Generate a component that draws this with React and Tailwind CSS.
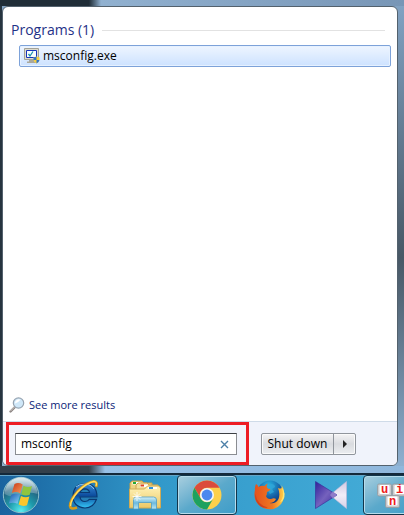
import { useState } from 'react';

// === ICONS ===
const MsconfigIcon = () => (
  <svg width="16" height="16" viewBox="0 0 16 16" className="shrink-0" aria-hidden="true">
    <path d="M0.500 0.500h14v11h-14z" fill="#dedbcd" stroke="#a3a298" strokeWidth="1" />
    <path d="M2.500 2.500h10v7h-10z" fill="#f7fcff" stroke="#1733b8" strokeWidth="1" />
    <path d="M4.500 6l1.500 2 3-4.500" fill="none" stroke="#1d93ad" strokeWidth="1.300" />
    <path d="M5 12h5v1.500h2V15H3v-1.500h2z" fill="#aaa89c" />
    <path d="M12.500 8.500q1.500 1 3 .7v2.500q-.5 2.300-3 3.800-2.500-1.500-3-3.800V9.200q1.500.3 3-.7z" fill="#f7cf3d" />
    <path d="M12.500 8.500q-1.500 1-3 .7V12h3zM12.500 12h3q-.5 2-3 3.500z" fill="#3173c8" />
  </svg>
);

const MagnifierIcon = () => (
  <svg width="16" height="16" viewBox="0 0 16 16" className="shrink-0" aria-hidden="true">
    <path d="M6 10L1.500 14.500" stroke="#8a8380" strokeWidth="2.400" strokeLinecap="round" />
    <path d="M6 9.500L1.500 14" stroke="#d6d0cd" strokeWidth="1" strokeLinecap="round" />
    <circle cx="9.500" cy="6" r="5.200" fill="#cfe7f8" stroke="#98a5b2" strokeWidth="1.200" />
    <path d="M6 6.500a3.800 3.800 0 0 1 5.500-3.700Q9 6 6 6.500z" fill="#fff" />
  </svg>
);

const StartOrb = () => (
  <svg width="38" height="38" viewBox="0 0 38 38" aria-hidden="true">
    <defs>
      <radialGradient id="orb" cx="50%" cy="95%" r="90%">
        <stop offset="0" stopColor="#58eef0" />
        <stop offset="0.4" stopColor="#1e9aab" />
        <stop offset="0.75" stopColor="#246582" />
        <stop offset="1" stopColor="#78a9bb" />
      </radialGradient>
      <linearGradient id="orbShine" x1="0" y1="0" x2="0" y2="1">
        <stop offset="0" stopColor="#fff" stopOpacity="0.75" />
        <stop offset="1" stopColor="#fff" stopOpacity="0.15" />
      </linearGradient>
      <linearGradient id="flagRed" x1="0" y1="0" x2="1" y2="1">
        <stop offset="0" stopColor="#c93a16" />
        <stop offset="1" stopColor="#f79a5c" />
      </linearGradient>
      <linearGradient id="flagBlue" x1="0" y1="0" x2="1" y2="1">
        <stop offset="0" stopColor="#1a58b0" />
        <stop offset="1" stopColor="#86d7f8" />
      </linearGradient>
    </defs>
    <circle cx="19" cy="19" r="17.700" fill="url(#orb)" stroke="#8ebfca" strokeWidth="1" />
    <path d="M2.500 18A16.500 16.500 0 0 1 35.500 18Q27 15 19 19T2.500 18z" fill="url(#orbShine)" />
    <path d="M12.500 8q4-2 8.200.5L18.300 17.500q-4-2.500-8.500-.5z" fill="url(#flagRed)" />
    <path d="M21.500 9.700q4 2.200 8.500.3L27.700 18.800q-4 1.800-8.400-.5z" fill="#8fc63f" />
    <path d="M9.300 18.800q4.500-2 8.700.2L15.500 27.800q-4-2-8.700-.4z" fill="url(#flagBlue)" />
    <path d="M19 20q4 2.200 8.400.5L25 29.300q-4 1.700-8.400-.7z" fill="#fbc62b" />
  </svg>
);

const ExplorerIcon = () => (
  <svg width="32" height="32" viewBox="0 0 32 32" aria-hidden="true">
    <defs>
      <linearGradient id="ieBlue" x1="0" y1="0" x2="0" y2="1">
        <stop offset="0" stopColor="#3a8ddb" />
        <stop offset="0.5" stopColor="#0c4c9d" />
        <stop offset="1" stopColor="#35c6f6" />
      </linearGradient>
    </defs>
    <path
      fillRule="evenodd"
      d="M30 18H13q.5 4.500 5 4.500 3 0 4.300-2.200H29.500Q26.500 29 18 29 6 28 6 17 6.500 5 18 4.500 30 5 30 18zM13 13.500h9.500q-.5-3.500-4.500-3.700-4 .2-5 3.700z"
      fill="url(#ieBlue)"
      stroke="#0b3972"
      strokeWidth="1.200"
    />
    <path d="M9 8q4-3.500 9-3 6 .3 9 5" fill="none" stroke="#8fc9f3" strokeWidth="1" />
    <path
      d="M29 8Q31 2.500 27 2.200 20 3 11 12 3 21 3 27q.5 4 7 1.500"
      fill="none"
      stroke="#d99b16"
      strokeWidth="2.600"
    />
    <path d="M29 7Q30.500 2.500 27 2.500 20 3.500 11 12.500 3.500 21 3.500 27" fill="none" stroke="#ffdf66" strokeWidth="1.300" />
  </svg>
);

const FolderIcon = () => (
  <svg width="34" height="30" viewBox="0 0 34 30" aria-hidden="true">
    <defs>
      <linearGradient id="folder" x1="0" y1="0" x2="0" y2="1">
        <stop offset="0" stopColor="#fff3b8" />
        <stop offset="1" stopColor="#ecc866" />
      </linearGradient>
      <linearGradient id="stand" x1="0" y1="0" x2="0" y2="1">
        <stop offset="0" stopColor="#d3f2fd" />
        <stop offset="0.5" stopColor="#64b8e4" />
        <stop offset="1" stopColor="#bdeafa" />
      </linearGradient>
    </defs>
    <path d="M2 27V3l2-2h10l2 2h8v24z" fill="#edd281" stroke="#c79f45" />
    <path d="M4.500 2h8v2.500h-8z" fill="#fff" />
    <path d="M5 2h3v2H5z" fill="#25a937" />
    <path d="M8 27V5l2-2h9l2 2h9v22z" fill="#f4df98" stroke="#cca54f" />
    <path d="M12 4.500h8V7h-8z" fill="#fff" />
    <path d="M12.500 4.500h3.500v2h-3.500z" fill="#d94527" />
    <path d="M1.500 28V9h15l3-3h11.500l1.500 2v20z" fill="url(#folder)" stroke="#d1ab54" />
    <path d="M20 7h9v2h-9z" fill="#fff" />
    <path d="M21 7h4v2h-4z" fill="#2d91db" />
    <path
      d="M5.500 29V20q0-3 3-3h17q3 0 3 3v9h-5v-6.500h-13V29z"
      fill="url(#stand)"
      fillOpacity="0.95"
      stroke="#4f9dc7"
      strokeWidth="0.8"
    />
    <path d="M9 12v9M4.500 16.500h9M6 13.500l6 6M12 13.500l-6 6" stroke="#fff" strokeWidth="0.8" />
  </svg>
);

const ChromeIcon = () => (
  <svg width="30" height="30" viewBox="0 0 30 30" aria-hidden="true">
    <circle cx="15" cy="15" r="14.500" fill="#fcd04b" />
    <path d="M2.450 7.750A14.500 14.500 0 0 1 27.550 7.750H15A7.250 7.250 0 0 0 8.720 18.620z" fill="#db4c3c" />
    <path d="M2.450 7.750A14.500 14.500 0 0 0 15 29.500L21.280 18.620A7.250 7.250 0 0 1 8.720 18.620z" fill="#1da15f" />
    <circle cx="15" cy="15" r="7" fill="#f4f6f8" />
    <circle cx="15" cy="15" r="5.400" fill="#4a88ee" />
  </svg>
);

const FirefoxIcon = () => (
  <svg width="32" height="32" viewBox="0 0 32 32" aria-hidden="true">
    <defs>
      <radialGradient id="globe" cx="45%" cy="20%" r="80%">
        <stop offset="0" stopColor="#28b7e5" />
        <stop offset="0.6" stopColor="#15599f" />
        <stop offset="1" stopColor="#112b69" />
      </radialGradient>
      <linearGradient id="fox" x1="0" y1="0" x2="1" y2="0">
        <stop offset="0" stopColor="#e2511d" />
        <stop offset="0.6" stopColor="#ef7721" />
        <stop offset="1" stopColor="#ffd34a" />
      </linearGradient>
    </defs>
    <circle cx="17" cy="14.500" r="13" fill="url(#globe)" />
    <path d="M18 5q4 0 4 3l-3 2 2 3-4 2-2-3-3-1 2-4z" fill="#31a6d8" fillOpacity="0.8" />
    <path
      d="M3 5q2 1 2.500 3 3-2 6-1 1-2 3.500-2.500-2 2.500-1 4 .5 1.500 3.500 1.500-.5 2-3.500 3 0 3-1 4 1 3.500 5 3 3-1.500 5 0-2 4-6.500 4 6 1.500 9-4 2-5-.5-11Q30 11 28.500 6q3.500 5 2.500 11Q30 27 20.500 30 11 31.500 5 25 0 19 2 11 1.500 8 3 5z"
      fill="url(#fox)"
    />
    <path d="M2.500 15Q4 26 15 28.500 8 30 4 23.500 1.500 19 2.500 15z" fill="#cf431d" />
    <path d="M29 9q3 8-2 14.500 5-2.500 4.500-9Q31 11 29 9z" fill="#ffe574" />
  </svg>
);

const BowtieIcon = () => (
  <svg width="32" height="28" viewBox="0 0 32 28" aria-hidden="true">
    <defs>
      <linearGradient id="bowDark" x1="0" y1="0" x2="1" y2="1">
        <stop offset="0" stopColor="#30209b" />
        <stop offset="0.5" stopColor="#7562bd" />
        <stop offset="1" stopColor="#38249a" />
      </linearGradient>
      <linearGradient id="bowLight" x1="0" y1="0" x2="0" y2="1">
        <stop offset="0" stopColor="#d0c8e2" />
        <stop offset="0.5" stopColor="#f1edf7" />
        <stop offset="1" stopColor="#d8d1e8" />
      </linearGradient>
    </defs>
    <path d="M31.500 0.500v27L15 14z" fill="url(#bowLight)" stroke="#c2b8d9" strokeWidth="0.600" />
    <path d="M0.500 0.500L22 14 0.500 27.500z" fill="url(#bowDark)" stroke="#382996" strokeWidth="0.600" />
    <path d="M15 14l3-3.500 4 3.500-4 3.500z" fill="#8f7cc9" />
  </svg>
);

const Key = ({ x, y, letter }) => (
  <g>
    <rect x={x} y={y} width="14" height="12" rx="1.500" fill="#c9cacd" stroke="#95999d" strokeWidth="0.800" />
    <rect x={x + 2} y={y + 1} width="10" height="9" rx="1" fill="#fff" />
    <text x={x + 7} y={y + 9} textAnchor="middle" fontSize="12" fontWeight="700" fill="#ee1c1c" className="font-['Liberation_Mono',monospace]">
      {letter}
    </text>
  </g>
);

const KeysIcon = () => (
  <svg width="32" height="28" viewBox="0 0 32 28" aria-hidden="true">
    <Key x={0.500} y={3} letter="u" />
    <Key x={15.500} y={3} letter="i" />
    <Key x={8.500} y={14.500} letter="n" />
  </svg>
);

// === TASKBAR ===
const TaskButton = ({ label, icon: Icon, isOpen }) => (
  <button
    type="button"
    aria-label={label}
    className={`flex h-10 w-15 shrink-0 items-center justify-center rounded-sm border ${
      isOpen
        ? 'border-[#12364c] bg-linear-to-br from-[#a9cfdf] via-[#5ba9cb] to-[#3d9dc9] shadow-[inset_0_0_0_1px_#b5dcec]'
        : 'border-transparent'
    }`}
  >
    <Icon />
  </button>
);

const tasks = [
  { label: 'Internet Explorer', icon: ExplorerIcon },
  { label: 'Windows Explorer', icon: FolderIcon },
  { label: 'Google Chrome', icon: ChromeIcon, isOpen: true },
  { label: 'Firefox', icon: FirefoxIcon },
  { label: 'Media Player', icon: BowtieIcon },
  { label: 'Keyboard', icon: KeysIcon, isOpen: true },
];

const Taskbar = () => (
  <nav
    aria-label="Taskbar"
    className="flex h-[42px] items-center gap-0.5 overflow-hidden border-t-2 border-[#14293a] bg-linear-to-r from-[#19639f] via-[#3299ca] via-40% to-[#45add8] shadow-[inset_0_1px_0_#65a5c8]"
  >
    <button type="button" aria-label="Start" className="flex w-[51px] shrink-0 items-center pl-0.5">
      <StartOrb />
    </button>
    {tasks.map((task) => (
      <TaskButton key={task.label} {...task} />
    ))}
  </nav>
);

// === START MENU ===
const StartMenu = () => {
  const [query, setQuery] = useState('msconfig');

  return (
    <section className="mr-1.5 flex flex-1 flex-col overflow-hidden rounded-md border border-[#53616d] bg-white">
      <div className="flex flex-1 flex-col pt-3">
        <div className="flex items-center gap-2 pr-3 pl-2">
          <h2 className="text-[14px] leading-[22px] text-[#1f3287]">Programs (1)</h2>
          <div className="h-px flex-1 bg-[#e2e2e2]" />
        </div>
        <button
          type="button"
          className="mt-1 mr-1.5 ml-4 flex h-[22px] items-center gap-[3px] rounded-xs border border-[#7da2d9] bg-linear-to-b from-[#eef5ff] to-[#cde2ff] pl-1 text-xs text-black shadow-[inset_0_0_0_1px_#e6f1ff]"
        >
          <MsconfigIcon />
          msconfig.exe
        </button>
        <a href="#results" className="mt-auto mb-1.5 flex h-5 items-center gap-1 pl-1.5 text-[11px] text-[#0b1d78]">
          <MagnifierIcon />
          See more results
        </a>
      </div>

      <div className="flex items-center gap-3 border-t border-[#cfdbe8] bg-[#f0f3fb] pl-[3px]">
        <div className="border-3 border-[#ed1c24] pt-2 pr-[9px] pb-[7px] pl-1.5">
          <div className="flex h-[22px] w-[222px] items-center border border-[#8a8d92] border-t-[#3c3f44] bg-white pr-1.5 pl-[5px]">
            <input
              type="text"
              aria-label="Search programs and files"
              value={query}
              onChange={(e) => setQuery(e.target.value)}
              className="min-w-0 flex-1 bg-transparent text-xs text-black outline-none"
            />
            <button type="button" aria-label="Clear search" onClick={() => setQuery('')}>
              <svg width="11" height="11" viewBox="0 0 11 11" aria-hidden="true">
                <path d="M2 2l7 7M9 2l-7 7" stroke="#4b7fa8" strokeWidth="1.400" />
              </svg>
            </button>
          </div>
        </div>
        <div className="flex h-[22px] rounded-xs border border-[#90959c] bg-linear-to-b from-[#f4f4f5] via-[#d9dbdf] to-[#eceef1] shadow-[inset_0_0_0_1px_#fafafa]">
          <button type="button" className="w-[71px] text-xs whitespace-nowrap text-black">
            Shut down
          </button>
          <button type="button" aria-label="Shut down options" className="flex w-[22px] items-center justify-center border-l border-[#90959c]">
            <svg width="4" height="8" viewBox="0 0 4 8" aria-hidden="true">
              <path d="M0 0l4 4-4 4z" fill="#222" />
            </svg>
          </button>
        </div>
      </div>
    </section>
  );
};

const App = () => (
  <main className="flex min-h-screen flex-col bg-linear-to-b from-[#83a4c5] via-[#485866] via-50% to-[#9fc6eb] font-['Open_Sans','Noto_Sans',sans-serif]">
    <div className="h-1.5 bg-linear-to-r from-[#202d37] from-22% via-[#91b1d0] via-25% to-[#7896b6]" />
    <div className="flex flex-1 flex-col border-l-2 border-[#26343f]">
      <StartMenu />
    </div>
    <div className="h-[7px] bg-linear-to-r from-[#34404b] from-22% via-[#98c1e7] via-26% to-[#8fb7dc]" />
    <Taskbar />
  </main>
);

export default App;
